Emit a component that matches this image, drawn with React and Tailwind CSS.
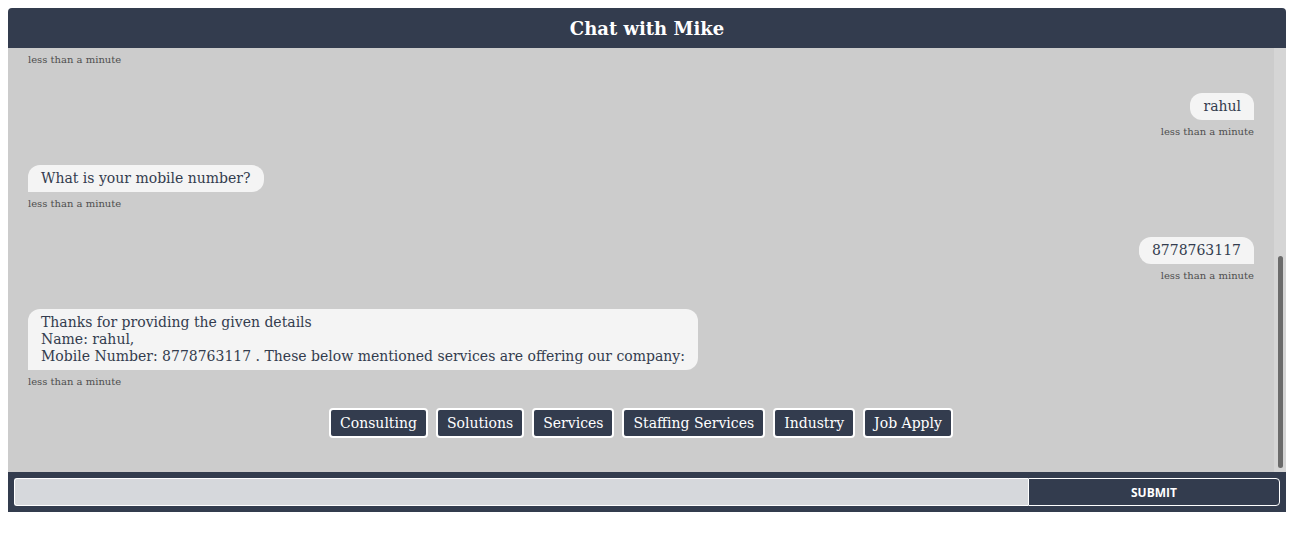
import React from "react";

function Stamp({ right }) {
  return (
    <div className={`mt-[6px] text-[10px] leading-[12px] text-[#4f4f4f] ${right ? "text-right" : ""}`}>
      less than a minute
    </div>
  );
}

function Bot({ children }) {
  return (
    <div className="mb-[27px] flex flex-col items-start">
      <div className="rounded-t-[12px] rounded-br-[12px] bg-[#f4f4f4] px-[13px] py-[5px] text-[14px] leading-[17px] text-[#333c4e]">
        {children}
      </div>
      <Stamp />
    </div>
  );
}

function User({ children }) {
  return (
    <div className="mb-[27px] flex flex-col items-end">
      <div className="rounded-t-[12px] rounded-bl-[12px] bg-[#f4f4f4] px-[13px] py-[5px] text-[14px] leading-[17px] text-[#333c4e]">
        {children}
      </div>
      <Stamp right />
    </div>
  );
}

export default function App() {
  const buttons = ["Consulting", "Solutions", "Services", "Staffing Services", "Industry", "Job Apply"];
  return (
    <div className="p-2 font-['DejaVu_Serif',serif]">
      <div className="flex flex-col overflow-hidden rounded-t-[4px]">
        <div className="flex h-10 items-center justify-center bg-[#333c4e] text-[18px] font-bold text-white">
          Chat with Mike
        </div>
        <div className="flex h-[424px] bg-[#cccccc]">
          <div className="flex-1 overflow-hidden px-5 pt-[6px]">
            <div className="mb-[27px] text-[10px] leading-[12px] text-[#4f4f4f]">less than a minute</div>
            <User>rahul</User>
            <Bot>What is your mobile number?</Bot>
            <User>8778763117</User>
            <div className="mb-[20px] flex flex-col items-start">
              <div className="rounded-t-[12px] rounded-br-[12px] bg-[#f4f4f4] px-[13px] py-[5px] text-[14px] leading-[17px] text-[#333c4e]">
                Thanks for providing the given details
                <br />
                Name: rahul,
                <br />
                Mobile Number: 8778763117 . These below mentioned services are offering our company:
              </div>
              <Stamp />
            </div>
            <div className="flex justify-center gap-2">
              {buttons.map((b) => (
                <button
                  key={b}
                  className="h-[30px] rounded-[4px] border-2 border-white bg-[#333c4e] px-[9px] pt-px text-[14px] leading-[17px] text-white"
                >
                  {b}
                </button>
              ))}
            </div>
          </div>
          <div className="flex w-3 flex-col justify-end bg-[#d5d5d5] pb-[4px]">
            <div className="mx-auto h-[212px] w-[5px] rounded-full bg-[#6b6b6b]" />
          </div>
        </div>
        <div className="flex h-10 bg-[#333c4e] p-[6px]">
          <div className="flex-1 rounded-l-[3px] border border-r-0 border-white bg-[#d6d8dc]" />
          <button className="w-[252px] rounded-r-[4px] border border-white bg-[#333c4e] pt-px font-['Open_Sans',sans-serif] text-[12px] font-bold text-white">
            SUBMIT
          </button>
        </div>
      </div>
    </div>
  );
}
